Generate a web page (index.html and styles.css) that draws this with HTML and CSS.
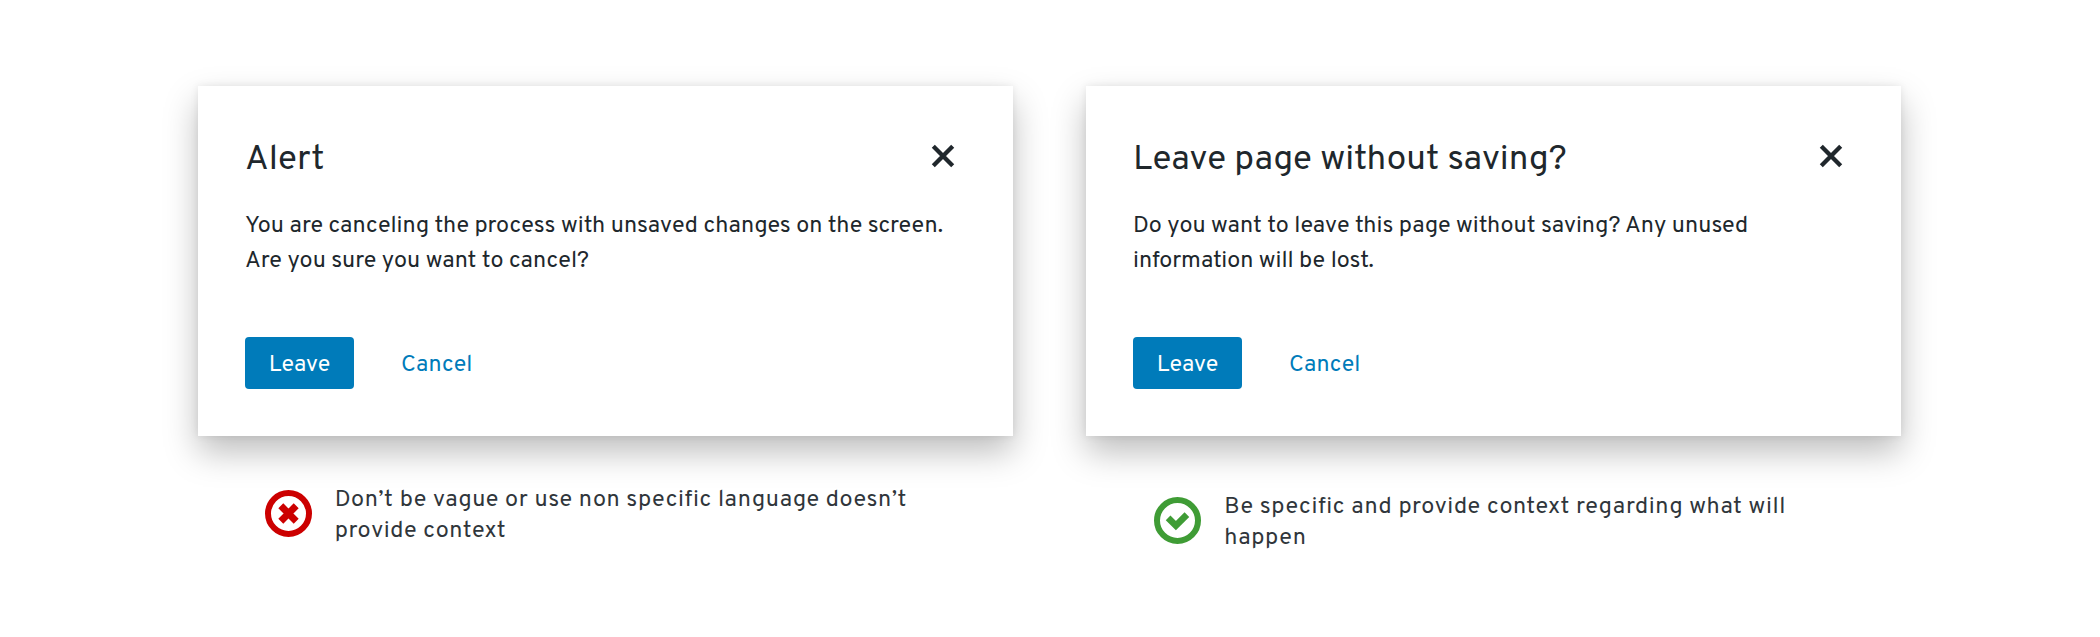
FILE: index.html
```html
<!DOCTYPE html>
<html lang="en">
<head>
<meta charset="utf-8">
<title>Dialog writing guidelines</title>
<link rel="stylesheet" href="styles.css">
</head>
<body>
<main class="examples">
  <section class="example">
    <div class="dialog">
      <header class="dialog-header">
        <h2 class="title">Alert</h2>
        <svg class="close" viewBox="0 0 24 24" aria-label="Close"><path d="M2.3 2.3 21.7 21.7M21.7 2.3 2.3 21.7"/></svg>
      </header>
      <p class="message">You are canceling the process with unsaved changes on the screen.<br>Are you sure you want to cancel?</p>
      <div class="actions">
        <button class="button primary">Leave</button>
        <button class="button link">Cancel</button>
      </div>
    </div>
    <div class="caption dont">
      <svg class="badge" viewBox="0 0 47 47">
        <circle class="ring" cx="23.5" cy="23.5" r="20.5"/>
        <path class="cross" d="M15.8 15.8 31.2 31.2M31.2 15.8 15.8 31.2"/>
      </svg>
      <p class="note">Don’t be vague or use non specific language doesn’t<br>provide context</p>
    </div>
  </section>
  <section class="example">
    <div class="dialog">
      <header class="dialog-header">
        <h2 class="title">Leave page without saving?</h2>
        <svg class="close" viewBox="0 0 24 24" aria-label="Close"><path d="M2.3 2.3 21.7 21.7M21.7 2.3 2.3 21.7"/></svg>
      </header>
      <p class="message">Do you want to leave this page without saving? Any unused<br>information will be lost.</p>
      <div class="actions">
        <button class="button primary">Leave</button>
        <button class="button link">Cancel</button>
      </div>
    </div>
    <div class="caption do">
      <svg class="badge" viewBox="0 0 47 47">
        <circle class="ring" cx="23.5" cy="23.5" r="20.5"/>
        <path class="check" d="M14.1 20.8 21.9 28.6 32.9 17.6"/>
      </svg>
      <p class="note">Be specific and provide context regarding what will<br>happen</p>
    </div>
  </section>
</main>
</body>
</html>
```
FILE: styles.css
```css
* { box-sizing: border-box; }

body {
  margin: 0;
  background: #fff;
  color: #20272c;
  font-family: Overpass, Roboto, "Liberation Sans", sans-serif;
  font-size: 23.35px;
}

.examples {
  display: grid;
  grid-template-columns: 815.3px 815.3px;
  column-gap: 72.7px;
  padding: 86px 198px 0;
}

.dialog {
  height: 350px;
  padding: 53px 47px 0;
  background: #fff;
  box-shadow: 0 16px 32px rgba(3, 3, 3, .26), 0 0 8px rgba(3, 3, 3, .08);
}

.dialog-header {
  display: flex;
  justify-content: space-between;
}

.title {
  margin: 0;
  font-size: 35px;
  font-weight: 400;
  line-height: 42px;
}

.close {
  width: 24px;
  height: 24px;
  margin: 5.4px 11.2px 0 0;
  fill: none;
  stroke: #20272c;
  stroke-width: 4.3;
}

.message {
  margin: 28px 0 0;
  line-height: 34.7px;
  white-space: nowrap;
}

.actions {
  display: flex;
  gap: 24.3px;
  margin-top: 58.1px;
}

.button {
  height: 52.5px;
  padding: 6.4px 22.7px 0;
  border: 0;
  border-radius: 4px;
  font: inherit;
  font-size: 23.2px;
}

.primary {
  width: 109px;
  background: #007bba;
  color: #fff;
}

.link {
  background: none;
  color: #007bba;
}

.caption {
  display: flex;
  gap: 22.8px;
  padding: 49px 0 0 67px;
}

.do { padding: 56.2px 0 0 68.5px; }

.badge {
  flex: none;
  width: 47px;
  height: 47px;
  margin-top: 5px;
  fill: none;
  stroke: #c00;
}

.do .badge { stroke: #3f9c35; }

.ring { stroke-width: 6; }

.cross { stroke-width: 7; }

.check { stroke-width: 6.6; }

.note {
  margin: 0;
  color: #30363b;
  font-size: 23.4px;
  line-height: 30.7px;
  letter-spacing: .6px;
  white-space: nowrap;
}
```
